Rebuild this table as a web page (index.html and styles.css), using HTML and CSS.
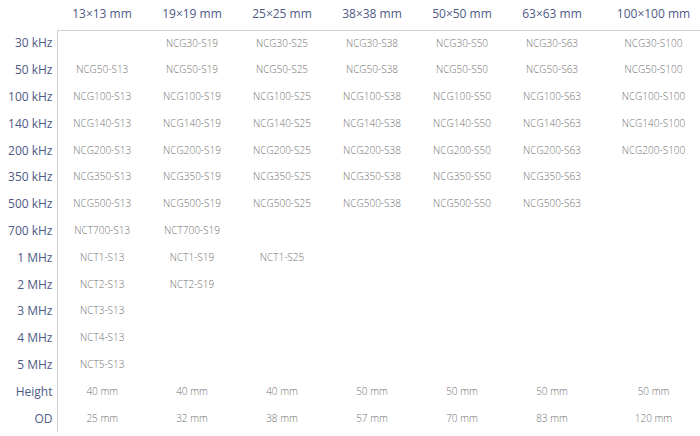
FILE: index.html
```html
<!DOCTYPE html>
<html>
<head>
<meta charset="utf-8">
<link rel="stylesheet" href="styles.css">
</head>
<body>
<table class="grid">
  <thead>
    <tr>
      <th class="corner"></th>
      <th>13×13 mm</th><th>19×19 mm</th><th>25×25 mm</th><th>38×38 mm</th><th>50×50 mm</th><th>63×63 mm</th><th class="wide">100×100 mm</th>
    </tr>
  </thead>
  <tbody>
    <tr><th>30 kHz</th><td></td><td>NCG30-S19</td><td>NCG30-S25</td><td>NCG30-S38</td><td>NCG30-S50</td><td>NCG30-S63</td><td>NCG30-S100</td></tr>
    <tr><th>50 kHz</th><td>NCG50-S13</td><td>NCG50-S19</td><td>NCG50-S25</td><td>NCG50-S38</td><td>NCG50-S50</td><td>NCG50-S63</td><td>NCG50-S100</td></tr>
    <tr><th>100 kHz</th><td>NCG100-S13</td><td>NCG100-S19</td><td>NCG100-S25</td><td>NCG100-S38</td><td>NCG100-S50</td><td>NCG100-S63</td><td>NCG100-S100</td></tr>
    <tr><th>140 kHz</th><td>NCG140-S13</td><td>NCG140-S19</td><td>NCG140-S25</td><td>NCG140-S38</td><td>NCG140-S50</td><td>NCG140-S63</td><td>NCG140-S100</td></tr>
    <tr><th>200 kHz</th><td>NCG200-S13</td><td>NCG200-S19</td><td>NCG200-S25</td><td>NCG200-S38</td><td>NCG200-S50</td><td>NCG200-S63</td><td>NCG200-S100</td></tr>
    <tr><th>350 kHz</th><td>NCG350-S13</td><td>NCG350-S19</td><td>NCG350-S25</td><td>NCG350-S38</td><td>NCG350-S50</td><td>NCG350-S63</td><td></td></tr>
    <tr><th>500 kHz</th><td>NCG500-S13</td><td>NCG500-S19</td><td>NCG500-S25</td><td>NCG500-S38</td><td>NCG500-S50</td><td>NCG500-S63</td><td></td></tr>
    <tr><th>700 kHz</th><td>NCT700-S13</td><td>NCT700-S19</td><td></td><td></td><td></td><td></td><td></td></tr>
    <tr><th>1 MHz</th><td>NCT1-S13</td><td>NCT1-S19</td><td>NCT1-S25</td><td></td><td></td><td></td><td></td></tr>
    <tr><th>2 MHz</th><td>NCT2-S13</td><td>NCT2-S19</td><td></td><td></td><td></td><td></td><td></td></tr>
    <tr><th>3 MHz</th><td>NCT3-S13</td><td></td><td></td><td></td><td></td><td></td><td></td></tr>
    <tr><th>4 MHz</th><td>NCT4-S13</td><td></td><td></td><td></td><td></td><td></td><td></td></tr>
    <tr><th>5 MHz</th><td>NCT5-S13</td><td></td><td></td><td></td><td></td><td></td><td></td></tr>
    <tr><th>Height</th><td>40 mm</td><td>40 mm</td><td>40 mm</td><td>50 mm</td><td>50 mm</td><td>50 mm</td><td>50 mm</td></tr>
    <tr><th>OD</th><td>25 mm</td><td>32 mm</td><td>38 mm</td><td>57 mm</td><td>70 mm</td><td>83 mm</td><td>120 mm</td></tr>
  </tbody>
</table>
</body>
</html>
```
FILE: styles.css
```css
html, body {
  margin: 0;
  padding: 0;
  background: #ffffff;
  overflow: hidden;
}
body {
  width: 700px;
  height: 436px;
  font-family: "Open Sans", "Liberation Sans", sans-serif;
}
.grid {
  border-collapse: collapse;
  table-layout: fixed;
  width: 710px;
}
.grid th, .grid td {
  padding: 0;
  white-space: nowrap;
  line-height: 14px;
}
.grid thead tr {
  height: 30px;
}
.grid tbody tr {
  height: 26.8px;
}
.grid thead th {
  width: 90px;
  font-size: 12px;
  font-weight: 400;
  color: #4e5a86;
  text-align: center;
  vertical-align: middle;
  border-bottom: 1px solid #cfcfcf;
  padding-bottom: 2px;
}
.grid thead th.corner {
  width: 57px;
  border-bottom: none;
}
.grid thead th.wide {
  width: 113px;
}
.grid tbody th {
  font-size: 12px;
  font-weight: 400;
  color: #4e5a86;
  text-align: right;
  padding-right: 4px;
  border-right: 1px solid #cfcfcf;
  vertical-align: middle;
}
.grid tbody td {
  font-size: 10px;
  font-weight: 300;
  color: #727272;
  text-align: center;
  vertical-align: middle;
  padding-bottom: 2px;
}
```
